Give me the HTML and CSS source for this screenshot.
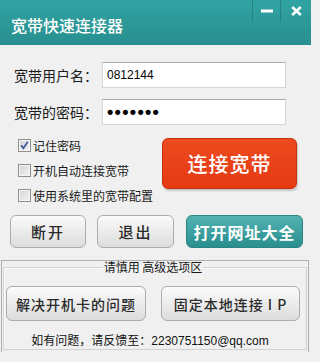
FILE: index.html
```html
<!DOCTYPE html>
<html lang="zh-CN">
<head>
<meta charset="utf-8">
<title>宽带快速连接器</title>
<link rel="stylesheet" href="styles.css">
</head>
<body>
<div class="window">
  <header class="titlebar">
    <span class="title">宽带快速连接器</span>
    <div class="winbtns">
      <span class="winbtn min"><svg width="12" height="4" viewBox="0 0 12 4"><rect x="0" y="0.5" width="12" height="3" fill="#fff"/></svg></span>
      <span class="winbtn close"><svg width="11" height="10" viewBox="0 0 11 10"><path d="M1.2 1 L9.8 9 M9.8 1 L1.2 9" stroke="#fff" stroke-width="2.6" stroke-linecap="butt"/></svg></span>
    </div>
  </header>
  <main class="content">
    <div class="field-row">
      <label class="field-label" for="user">宽带用户名：</label>
      <input class="field-input" id="user" type="text" value="0812144">
    </div>
    <div class="field-row second">
      <label class="field-label" for="pwd">宽带的密码：</label>
      <input class="field-input pwd" id="pwd" type="password" value="1234567">
    </div>
    <div class="options">
      <div class="checks">
        <div class="check"><span class="box"><svg width="11" height="11" viewBox="0 0 11 11"><path d="M2.2 5.2 L4.4 8.2 L8.8 1.8" fill="none" stroke="#3c5a9a" stroke-width="1.8"/></svg></span><span>记住密码</span></div>
        <div class="check"><span class="box"></span><span>开机自动连接宽带</span></div>
        <div class="check"><span class="box"></span><span>使用系统里的宽带配置</span></div>
      </div>
      <button class="connect">连接宽带</button>
    </div>
    <div class="actions">
      <button class="btn grey b1">断开</button>
      <button class="btn grey b2">退出</button>
      <button class="btn teal b3">打开网址大全</button>
    </div>
    <section class="advanced">
      <fieldset class="group">
        <legend class="group-title">请慎用 高级选项区</legend>
        <div class="adv-buttons">
          <button class="btn grey adv a1">解决开机卡的问题</button>
          <button class="btn grey adv a2">固定本地连接 I P</button>
        </div>
        <p class="contact">如有问题，请反馈至：<span class="mail">2230751150@qq.com</span></p>
      </fieldset>
    </section>
  </main>
</div>
</body>
</html>
```
FILE: styles.css
```css
* { box-sizing: border-box; }
html, body { margin: 0; padding: 0; }
body {
  width: 311px;
  height: 362px;
  background: #f0f0f0;
  font-family: "Noto Sans CJK SC", "Liberation Sans", sans-serif;
  color: #1a1a1a;
  overflow: hidden;
}
.window { width: 311px; height: 362px; }

.titlebar {
  height: 45px;
  background: linear-gradient(#31a3a3, #288f8f);
  display: flex;
  align-items: flex-start;
}
.title {
  color: #fff;
  font-size: 16px;
  line-height: 18px;
  font-weight: 500;
  margin: 16px 0 0 11px;
}
.winbtns {
  margin-left: auto;
  display: flex;
  height: 22px;
}
.winbtn {
  display: flex;
  align-items: center;
  justify-content: center;
  height: 22px;
  border-left: 1px solid #268686;
}
.winbtn.min { width: 28px; }
.winbtn.close { width: 31px; padding-bottom: 1px; }

.content { padding-top: 17px; }
.field-row { display: flex; align-items: center; }
.field-row.second { margin-top: 11px; }
.field-label {
  width: 102px;
  padding-left: 14px;
  font-size: 14px;
  line-height: 18px;
  color: #1a1a1a;
}
.field-input {
  width: 184px;
  height: 26px;
  margin: 0;
  border: 1px solid #d6d6d6;
  border-top-color: #a9a9a9;
  background: #fff;
  padding: 0 4px;
  font-family: "Liberation Sans", sans-serif;
  font-size: 12px;
  color: #000;
  outline: none;
}
.field-input.pwd {
  font-size: 18px;
  letter-spacing: 1.3px;
  font-weight: bold;
}

.options { display: flex; margin-top: 13px; }
.checks {
  padding: 1px 0 0 18px;
  display: flex;
  flex-direction: column;
  gap: 12px;
}
.check {
  display: flex;
  align-items: center;
  gap: 2px;
  height: 13px;
  font-size: 12px;
  line-height: 13px;
  color: #1a1a1a;
}
.box {
  width: 13px;
  height: 13px;
  border: 1px solid #8e8f8f;
  background: linear-gradient(135deg, #d3d3d3, #f4f4f4);
  box-shadow: inset 0 0 0 1px #f5f5f5;
  display: flex;
  align-items: center;
  justify-content: center;
}
.connect {
  margin-left: auto;
  margin-right: 14px;
  width: 135px;
  height: 51px;
  border: 1px solid #c5300c;
  border-radius: 6px;
  background: linear-gradient(#ec4a1f, #e63a13);
  box-shadow: 1px 2px 2px rgba(0,0,0,0.18);
  color: #fff;
  font-family: "Noto Sans CJK SC", sans-serif;
  font-size: 20px;
  font-weight: 500;
  letter-spacing: 1px;
  padding: 0;
}

.actions { display: flex; margin-top: 13px; padding-left: 10px; }
.btn {
  height: 33px;
  margin: 0;
  padding: 0;
  border-radius: 6px;
  font-family: "Noto Sans CJK SC", sans-serif;
}
.btn.grey {
  border: 1px solid #adadad;
  background: linear-gradient(#fbfbfb, #dcdcdc);
  color: #2b2b2b;
  font-size: 15px;
  font-weight: 500;
  letter-spacing: 2px;
}
.b1 { width: 76px; }
.b2 { width: 77px; margin-left: 11px; }
.b3 { width: 117px; margin-left: 12px; }
.btn.teal {
  border: 1px solid #2b8585;
  background: linear-gradient(#52b2b2, #2a8e8e);
  color: #fff;
  font-size: 16px;
  font-weight: 700;
  letter-spacing: 1px;
}

.advanced {
  margin: 12px 0 0 1px;
  width: 308px;
  border: 1px solid #b0b0b0;
  border-bottom: none;
  padding: 0 1px 2px 1px;
}
.group {
  margin: 0;
  padding: 0 6px 0 2px;
  border: 1px solid #d2d2d2;
  box-shadow: inset 1px 1px 0 #fbfbfb;
}
.group-title {
  margin: 0 auto;
  padding: 0 1px;
  font-size: 12px;
  line-height: 12px;
  color: #1a1a1a;
}
.adv-buttons {
  display: flex;
  justify-content: space-between;
  margin-top: 13px;
}
.btn.adv {
  height: 35px;
  font-size: 14px;
  letter-spacing: 1px;
}
.a1 { width: 140px; }
.a2 { width: 139px; }
.contact {
  margin: 11px 0 0;
  padding-right: 6px;
  text-align: center;
  font-size: 12px;
  line-height: 15px;
  color: #111;
}
.mail {
  font-family: "Liberation Sans", sans-serif;
  font-size: 12px;
}
```
